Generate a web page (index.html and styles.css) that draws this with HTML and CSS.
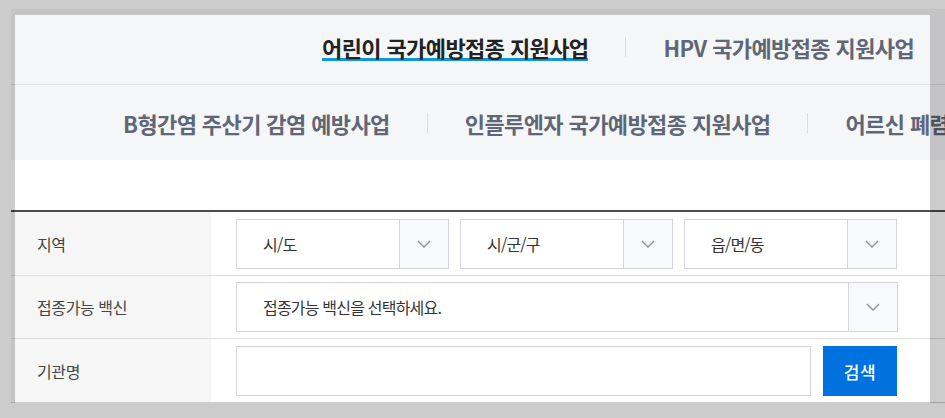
FILE: index.html
```html
<!DOCTYPE html>
<html lang="ko">
<head>
<meta charset="utf-8">
<title>예방접종 기관 검색</title>
<link rel="stylesheet" href="styles.css">
</head>
<body>
<div class="page">
  <nav class="tabs">
    <ul class="tab-row tab-row--first">
      <li class="is-active"><a href="#">어린이 국가예방접종 지원사업</a></li>
      <li><a href="#">HPV 국가예방접종 지원사업</a></li>
    </ul>
    <ul class="tab-row tab-row--second">
      <li><a href="#">B형간염 주산기 감염 예방사업</a></li>
      <li><a href="#">인플루엔자 국가예방접종 지원사업</a></li>
      <li><a href="#">어르신 폐렴구균 국가예방접종 지원사업</a></li>
    </ul>
  </nav>

  <div class="gap-area"></div>

  <div class="search-table">
    <div class="row">
      <div class="label">지역</div>
      <div class="cell cell--selects">
        <div class="select select--third"><span class="select-text">시/도</span><span class="select-arrow"><svg width="14" height="8" viewBox="0 0 14 8"><path d="M1 1l6 6 6-6" fill="none" stroke="#8c9098" stroke-width="1.4"/></svg></span></div>
        <div class="select select--third"><span class="select-text">시/군/구</span><span class="select-arrow"><svg width="14" height="8" viewBox="0 0 14 8"><path d="M1 1l6 6 6-6" fill="none" stroke="#8c9098" stroke-width="1.4"/></svg></span></div>
        <div class="select select--third"><span class="select-text">읍/면/동</span><span class="select-arrow"><svg width="14" height="8" viewBox="0 0 14 8"><path d="M1 1l6 6 6-6" fill="none" stroke="#8c9098" stroke-width="1.4"/></svg></span></div>
      </div>
    </div>
    <div class="row row--mid">
      <div class="label">접종가능 백신</div>
      <div class="cell">
        <div class="select select--wide"><span class="select-text">접종가능 백신을 선택하세요.</span><span class="select-arrow"><svg width="14" height="8" viewBox="0 0 14 8"><path d="M1 1l6 6 6-6" fill="none" stroke="#8c9098" stroke-width="1.4"/></svg></span></div>
      </div>
    </div>
    <div class="row">
      <div class="label">기관명</div>
      <div class="cell cell--search">
        <input class="text-input" type="text" aria-label="기관명">
        <button class="search-btn" type="button">검색</button>
      </div>
    </div>
  </div>
</div>
<div class="focus-frame"></div>
</body>
</html>
```

FILE: styles.css
```css
html, body {
  margin: 0;
  padding: 0;
  overflow: hidden;
  background: #ffffff;
  font-family: "Noto Sans CJK KR", "Noto Sans", sans-serif;
}

.page {
  margin: 9px 0 0 11px;
  width: 1400px;
}

/* tabs */
.tabs {
  background: #f5f6f8;
}

.tab-row {
  list-style: none;
  margin: 0;
  display: flex;
  align-items: center;
  height: 75px;
}

.tab-row--first {
  padding: 0 0 0 274px;
  border-bottom: 1px solid #dcdee2;
}

.tab-row--second {
  padding: 0 0 0 75px;
}

.tab-row li {
  display: flex;
  align-items: center;
  gap: 37px;
  margin: 0 37px;
  white-space: nowrap;
}

.tab-row li + li {
  margin-left: 0;
}

.tab-row li + li::before {
  content: "";
  width: 1px;
  height: 20px;
  background: #d9dce1;
}

.tab-row a {
  display: block;
  font-size: 22px;
  line-height: 22px;
  font-weight: 700;
  letter-spacing: -0.6px;
  color: #5f6776;
  text-decoration: none;
  padding-top: 3px;
  border-bottom: 3px solid transparent;
}

.tab-row li.is-active a {
  color: #222222;
  border-bottom-color: #0e97dd;
}

.gap-area {
  height: 50px;
  background: #ffffff;
}

/* search table */
.search-table {
  border-top: 2px solid #4d4d4d;
  border-bottom: 1px solid #cfcfcf;
}

.row {
  display: flex;
  border-top: 1px solid #dddddd;
}

.row:first-child {
  border-top: 0;
}

.label {
  width: 200px;
  flex: none;
  background: #f6f6f6;
  padding-left: 26px;
  box-sizing: border-box;
  display: flex;
  align-items: center;
  font-size: 16px;
  letter-spacing: -0.4px;
  color: #444444;
}

.cell {
  display: flex;
  align-items: center;
  padding: 7px 0 6px 25px;
  height: 63px;
  box-sizing: border-box;
  background: #ffffff;
  flex: 1;
}

.row--mid .cell {
  height: 62px;
  padding: 6px 0 6px 25px;
}

.cell--selects {
  gap: 11px;
}

.cell--search {
  gap: 12px;
}

.select {
  display: flex;
  height: 50px;
  box-sizing: border-box;
  border: 1px solid #d4d6db;
  background: #ffffff;
}

.select--third {
  width: 213px;
}

.select--wide {
  width: 662px;
}

.select-text {
  flex: 1;
  display: flex;
  align-items: center;
  padding-left: 26px;
  font-size: 16px;
  letter-spacing: -0.8px;
  color: #333333;
}

.select-arrow {
  width: 48px;
  flex: none;
  display: flex;
  align-items: center;
  justify-content: center;
  border-left: 1px solid #d4d6db;
  background: #f8f9fc;
}

.text-input {
  width: 575px;
  height: 50px;
  box-sizing: border-box;
  border: 1px solid #d4d6db;
  margin: 0;
  padding: 0 12px;
  font: inherit;
  outline: none;
}

.search-btn {
  width: 74px;
  height: 50px;
  border: 0;
  margin: 0;
  background: #0072e0;
  color: #ffffff;
  font-family: inherit;
  font-size: 17px;
  font-weight: 500;
  letter-spacing: 0.5px;
}

/* highlight overlay */
.focus-frame {
  position: absolute;
  left: 15px;
  top: 15px;
  width: 915px;
  height: 388px;
  box-shadow: 0 0 0 3000px rgba(0, 0, 0, 0.2);
  pointer-events: none;
}
```
